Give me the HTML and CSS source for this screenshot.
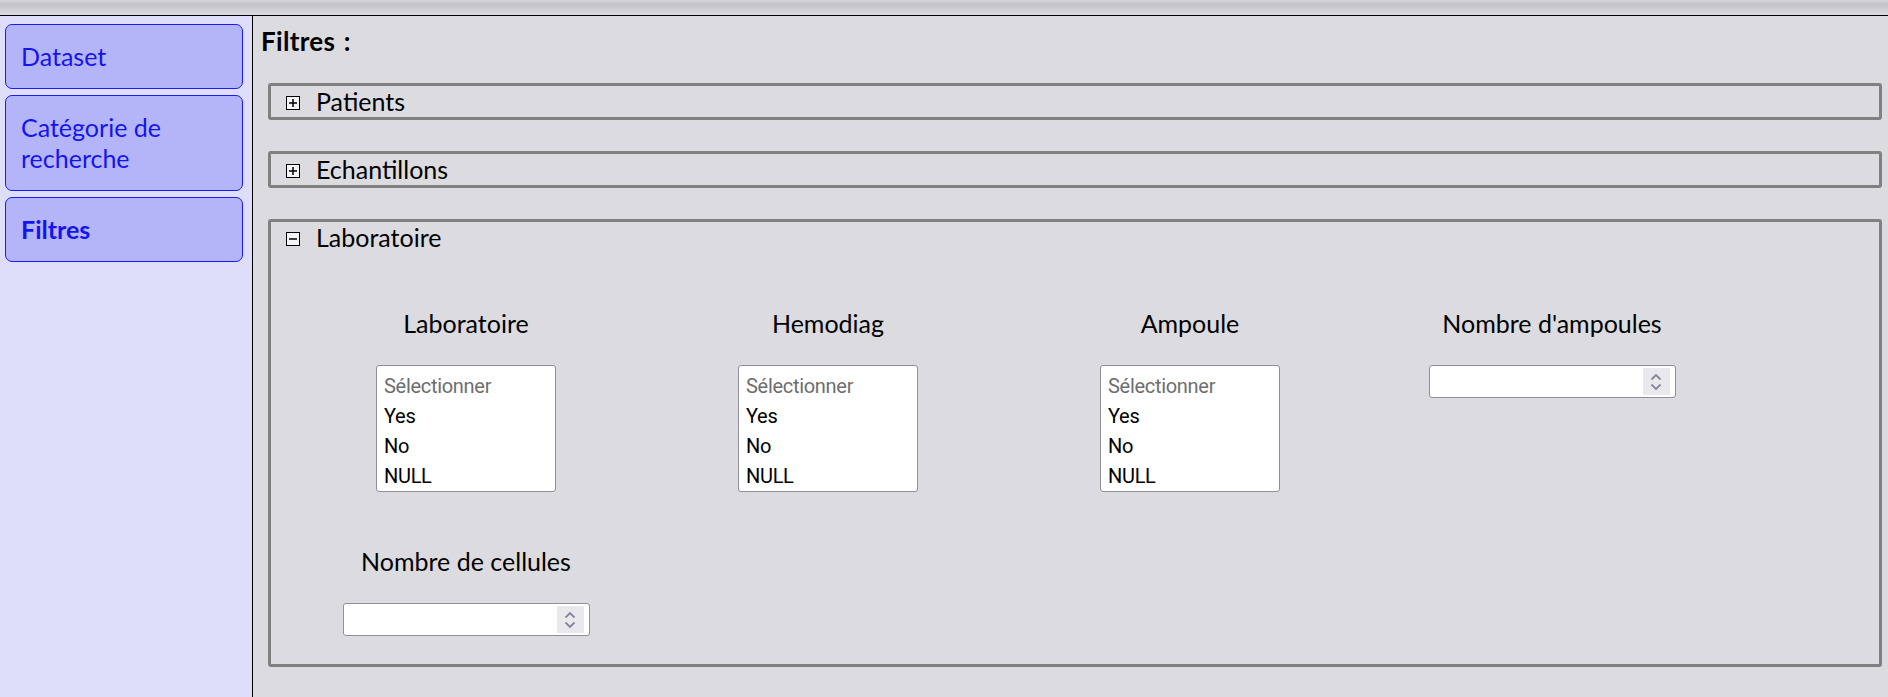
FILE: index.html
```html
<!DOCTYPE html>
<html lang="fr">
<head>
<meta charset="utf-8">
<title>Filtres</title>
<link rel="stylesheet" href="styles.css">
</head>
<body>
<div class="topbar"></div>
<div class="layout">
  <nav class="sidebar">
    <a class="nav-item">Dataset</a>
    <a class="nav-item">Catégorie de recherche</a>
    <a class="nav-item active">Filtres</a>
  </nav>
  <main class="main">
    <h1 class="title">Filtres :</h1>

    <section class="group">
      <div class="group-head">
        <span class="toggle"><svg width="14" height="14" viewBox="0 0 14 14"><rect x="0.5" y="0.5" width="13" height="13" fill="#f4f4f6" stroke="#000"/><path d="M3 7h8M7 3v8" stroke="#000" stroke-width="1.5"/></svg></span>
        <span class="group-name">Patients</span>
      </div>
    </section>

    <section class="group">
      <div class="group-head">
        <span class="toggle"><svg width="14" height="14" viewBox="0 0 14 14"><rect x="0.5" y="0.5" width="13" height="13" fill="#f4f4f6" stroke="#000"/><path d="M3 7h8M7 3v8" stroke="#000" stroke-width="1.5"/></svg></span>
        <span class="group-name">Echantillons</span>
      </div>
    </section>

    <section class="group open">
      <div class="group-head">
        <span class="toggle"><svg width="14" height="14" viewBox="0 0 14 14"><rect x="0.5" y="0.5" width="13" height="13" fill="#f4f4f6" stroke="#000"/><path d="M3 7h8" stroke="#000" stroke-width="1.5"/></svg></span>
        <span class="group-name">Laboratoire</span>
      </div>
      <div class="filters">
        <div class="filter">
          <label class="filter-label">Laboratoire</label>
          <div class="listbox">
            <div class="opt placeholder">Sélectionner</div>
            <div class="opt">Yes</div>
            <div class="opt">No</div>
            <div class="opt">NULL</div>
          </div>
        </div>
        <div class="filter">
          <label class="filter-label">Hemodiag</label>
          <div class="listbox">
            <div class="opt placeholder">Sélectionner</div>
            <div class="opt">Yes</div>
            <div class="opt">No</div>
            <div class="opt">NULL</div>
          </div>
        </div>
        <div class="filter">
          <label class="filter-label">Ampoule</label>
          <div class="listbox">
            <div class="opt placeholder">Sélectionner</div>
            <div class="opt">Yes</div>
            <div class="opt">No</div>
            <div class="opt">NULL</div>
          </div>
        </div>
        <div class="filter">
          <label class="filter-label">Nombre d'ampoules</label>
          <div class="number">
            <div class="spin"><svg width="14" height="20" viewBox="0 0 14 20"><path d="M2.5 7.5 7 3l4.5 4.5M2.5 12.5 7 17l4.5-4.5" fill="none" stroke="#85859a" stroke-width="1.8"/></svg></div>
          </div>
        </div>
        <div class="filter">
          <label class="filter-label">Nombre de cellules</label>
          <div class="number">
            <div class="spin"><svg width="14" height="20" viewBox="0 0 14 20"><path d="M2.5 7.5 7 3l4.5 4.5M2.5 12.5 7 17l4.5-4.5" fill="none" stroke="#85859a" stroke-width="1.8"/></svg></div>
          </div>
        </div>
      </div>
    </section>
  </main>
</div>
</body>
</html>
```

FILE: styles.css
```css
* { box-sizing: border-box; }

html, body {
  margin: 0;
  height: 100%;
}

body {
  background: #dcdbe0;
  font-family: "Lato", "Open Sans", sans-serif;
  color: #000;
  overflow: hidden;
}

.topbar {
  height: 16px;
  border-bottom: 1px solid #000;
  background: linear-gradient(to bottom, #d6d6da 0%, #c3c3c7 30%, #d2d2d6 70%, #dcdbe0 100%);
}

.layout {
  display: flex;
  height: calc(100% - 16px);
}

.sidebar {
  width: 253px;
  flex: none;
  background: #dedefa;
  border-right: 1px solid #000;
  padding: 8px 9px 0 5px;
  display: flex;
  flex-direction: column;
  gap: 6px;
}

.nav-item {
  display: block;
  background: #b4b4f8;
  border: 1px solid #1a1af5;
  border-radius: 7px;
  padding: 16px 15px;
  font-size: 25px;
  line-height: 31px;
  color: #1414ee;
  cursor: pointer;
}

.nav-item.active {
  font-weight: 700;
}

.main {
  flex: 1;
  padding: 10px 6px 0 15px;
}

.title {
  margin: 0 0 26px -7px;
  font-size: 26px;
  line-height: 31px;
  font-weight: 700;
  letter-spacing: 0.3px;
  word-spacing: 2px;
}

.group {
  border: 3px solid #808080;
  border-radius: 3px;
  margin-bottom: 31px;
}

.group-head {
  display: flex;
  align-items: center;
  height: 31px;
  padding-left: 15px;
  gap: 16px;
}

.toggle {
  display: flex;
  width: 14px;
  height: 14px;
  margin-top: 2px;
}

.group-name {
  font-size: 25px;
  line-height: 31px;
}

.filters {
  display: grid;
  grid-template-columns: repeat(4, 362px);
  row-gap: 54px;
  padding: 55px 0 28px 14px;
}

.filter {
  display: flex;
  flex-direction: column;
  align-items: center;
}

.filter-label {
  font-size: 25px;
  line-height: 31px;
  margin-bottom: 26px;
}

.listbox {
  width: 180px;
  height: 127px;
  background: #fff;
  border: 1px solid #8f8f9d;
  border-radius: 3px;
  padding: 5px 0 0 7px;
  font-family: "Liberation Sans Narrow", "Roboto", sans-serif;
  font-size: 20px;
  letter-spacing: -0.3px;
}

.opt {
  height: 30px;
  line-height: 30px;
  white-space: nowrap;
}

.opt.placeholder {
  color: #6e6e6e;
}

.number {
  width: 247px;
  height: 33px;
  background: #fff;
  border: 1px solid #8f8f9d;
  border-radius: 3px;
  display: flex;
  justify-content: flex-end;
  padding: 2px 5px 2px 0;
}

.spin {
  width: 27px;
  background: #e9e9ed;
  display: flex;
  align-items: center;
  justify-content: center;
}
```
